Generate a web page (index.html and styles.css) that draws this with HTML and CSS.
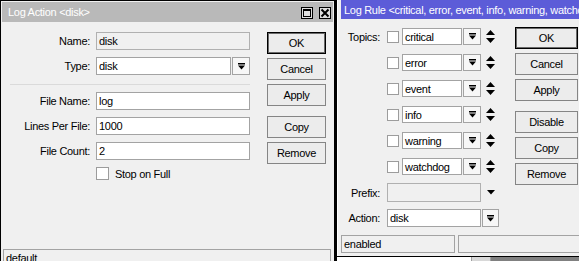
FILE: index.html
```html
<!DOCTYPE html>
<html lang="en">
<head>
    <meta charset="UTF-8">
    <title>Log Action / Log Rule</title>
    <link rel="stylesheet" href="styles.css">
</head>
<body>
    <div class="desk">
        <!-- Log Action window (inactive) -->
        <div class="win win-action">
            <div class="title title-off">
                <span class="title-text">Log Action &lt;disk&gt;</span>
                <span class="tbtn">
                    <svg width="10" height="10" viewBox="0 0 10 10"><rect x="1.5" y="1.5" width="7" height="7" fill="none" stroke="#000"/><rect x="1" y="1" width="8" height="2" fill="#000"/></svg>
                </span>
                <span class="tbtn tbtn-close">
                    <svg width="10" height="10" viewBox="0 0 10 10"><path d="M1.5 1.5 L8.5 8.5 M8.5 1.5 L1.5 8.5" stroke="#000" stroke-width="2"/></svg>
                </span>
            </div>
            <div class="act-body">
                <div class="act-form">
                    <div class="row"><label>Name:</label><div class="field field-off">disk</div></div>
                    <div class="row">
                        <label>Type:</label>
                        <div class="field field-type">disk</div>
                        <div class="dd">
                            <svg width="7" height="7" viewBox="0 0 7 7"><rect x="0" y="0" width="7" height="1.5" fill="#000"/><polygon points="0,2.5 7,2.5 3.5,6.5" fill="#000"/></svg>
                        </div>
                    </div>
                    <div class="sep"></div>
                    <div class="row"><label>File Name:</label><div class="field">log</div></div>
                    <div class="row"><label>Lines Per File:</label><div class="field">1000</div></div>
                    <div class="row"><label>File Count:</label><div class="field">2</div></div>
                    <div class="row row-check"><span class="check"></span><span>Stop on Full</span></div>
                </div>
                <div class="btns">
                    <button class="btn btn-default">OK</button>
                    <button class="btn">Cancel</button>
                    <button class="btn">Apply</button>
                    <button class="btn btn-gap">Copy</button>
                    <button class="btn">Remove</button>
                </div>
            </div>
            <div class="status"><div class="panel">default</div></div>
        </div>

        <div class="right-col">
            <!-- Log Rule window (active) -->
            <div class="win win-rule">
                <div class="title title-on">
                    <span class="title-text">Log Rule &lt;critical, error, event, info, warning, watchdog&gt;</span>
                </div>
                <div class="rule-body">
                    <div class="rule-main">
                        <div class="rule-form">
                            <div class="trow"><label>Topics:</label><span class="check"></span><div class="field">critical</div><div class="dd"><svg width="7" height="7" viewBox="0 0 7 7"><rect width="7" height="1.5" fill="#000"/><polygon points="0,2.5 7,2.5 3.5,6.5" fill="#000"/></svg></div><svg class="updown" width="9" height="13" viewBox="0 0 9 13"><polygon points="4.5,0 9,5 0,5" fill="#000"/><polygon points="0,8 9,8 4.5,13" fill="#000"/></svg></div>
                            <div class="trow"><label></label><span class="check"></span><div class="field">error</div><div class="dd"><svg width="7" height="7" viewBox="0 0 7 7"><rect width="7" height="1.5" fill="#000"/><polygon points="0,2.5 7,2.5 3.5,6.5" fill="#000"/></svg></div><svg class="updown" width="9" height="13" viewBox="0 0 9 13"><polygon points="4.5,0 9,5 0,5" fill="#000"/><polygon points="0,8 9,8 4.5,13" fill="#000"/></svg></div>
                            <div class="trow"><label></label><span class="check"></span><div class="field">event</div><div class="dd"><svg width="7" height="7" viewBox="0 0 7 7"><rect width="7" height="1.5" fill="#000"/><polygon points="0,2.5 7,2.5 3.5,6.5" fill="#000"/></svg></div><svg class="updown" width="9" height="13" viewBox="0 0 9 13"><polygon points="4.5,0 9,5 0,5" fill="#000"/><polygon points="0,8 9,8 4.5,13" fill="#000"/></svg></div>
                            <div class="trow"><label></label><span class="check"></span><div class="field">info</div><div class="dd"><svg width="7" height="7" viewBox="0 0 7 7"><rect width="7" height="1.5" fill="#000"/><polygon points="0,2.5 7,2.5 3.5,6.5" fill="#000"/></svg></div><svg class="updown" width="9" height="13" viewBox="0 0 9 13"><polygon points="4.5,0 9,5 0,5" fill="#000"/><polygon points="0,8 9,8 4.5,13" fill="#000"/></svg></div>
                            <div class="trow"><label></label><span class="check"></span><div class="field">warning</div><div class="dd"><svg width="7" height="7" viewBox="0 0 7 7"><rect width="7" height="1.5" fill="#000"/><polygon points="0,2.5 7,2.5 3.5,6.5" fill="#000"/></svg></div><svg class="updown" width="9" height="13" viewBox="0 0 9 13"><polygon points="4.5,0 9,5 0,5" fill="#000"/><polygon points="0,8 9,8 4.5,13" fill="#000"/></svg></div>
                            <div class="trow"><label></label><span class="check"></span><div class="field">watchdog</div><div class="dd"><svg width="7" height="7" viewBox="0 0 7 7"><rect width="7" height="1.5" fill="#000"/><polygon points="0,2.5 7,2.5 3.5,6.5" fill="#000"/></svg></div><svg class="updown" width="9" height="13" viewBox="0 0 9 13"><polygon points="4.5,0 9,5 0,5" fill="#000"/><polygon points="0,8 9,8 4.5,13" fill="#000"/></svg></div>

                            <div class="prow prow-prefix">
                                <label>Prefix:</label>
                                <div class="field field-off field-wide"></div>
                                <svg class="arrow-only" width="8" height="5" viewBox="0 0 8 5"><polygon points="0,0 8,0 4,4.5" fill="#000"/></svg>
                            </div>
                            <div class="prow prow-action">
                                <label>Action:</label>
                                <div class="field field-wide">disk</div>
                                <div class="dd dd-action"><svg width="7" height="7" viewBox="0 0 7 7"><rect width="7" height="1.5" fill="#000"/><polygon points="0,2.5 7,2.5 3.5,6.5" fill="#000"/></svg></div>
                            </div>
                        </div>
                        <div class="btns btns-rule">
                            <button class="btn btn-default">OK</button>
                            <button class="btn">Cancel</button>
                            <button class="btn">Apply</button>
                            <button class="btn btn-gap">Disable</button>
                            <button class="btn">Copy</button>
                            <button class="btn">Remove</button>
                        </div>
                    </div>
                    <div class="rule-status">
                        <div class="panel panel-first">enabled</div>
                        <div class="panel panel-rest"></div>
                    </div>
                </div>
            </div>
            <!-- piece of the window lying below -->
            <div class="below">
                <div class="below-white"></div>
                <div class="below-light"></div>
                <div class="below-dark"></div>
            </div>
        </div>
    </div>
</body>
</html>
```

FILE: styles.css
```css
* {
    box-sizing: border-box;
}

body {
    margin: 0;
    background: #f0f0f0;
    font-family: "Liberation Sans", Arial, sans-serif;
    font-size: 11px;
    letter-spacing: -0.3px;
    color: #000;
    overflow: hidden;
}

.desk {
    display: flex;
    height: 261px;
    overflow: hidden;
}

/* Windows */
.win {
    background: #f0f0f0;
    flex-shrink: 0;
}

.title {
    display: flex;
    align-items: center;
    color: #fff;
    white-space: nowrap;
    overflow: hidden;
}

.title-text {
    flex: 1;
}

.title-off {
    height: 20px;
    margin: 0 1px;
    padding: 0 2px 0 6px;
    background: #b9b9b9;
}

.title-on {
    height: 19px;
    padding: 0 0 0 3px;
    background: #5c5cd8;
}

.tbtn {
    width: 12px;
    height: 12px;
    border: 1px solid #000;
    background: #dedede;
    display: flex;
    align-items: center;
    justify-content: center;
    margin-top: 2px;
}

.tbtn-close {
    margin-left: 6px;
}

/* Log Action window */
.win-action {
    width: 335px;
    height: 290px;
    border: 1px solid #000;
    border-bottom: 0;
    padding-top: 1px;
}

.act-body {
    display: flex;
    height: 227px;
    padding-top: 10px;
}

.act-form {
    width: 249px;
    display: flex;
    flex-direction: column;
    gap: 7px;
}

.row {
    display: flex;
    align-items: center;
    height: 18px;
}

.row label {
    width: 89px;
    margin-right: 6px;
    text-align: right;
}

.field {
    height: 100%;
    flex: 1;
    background: #fff;
    border: 1px solid #a3a3a3;
    padding: 0 2px;
    display: flex;
    align-items: center;
    white-space: nowrap;
    overflow: hidden;
}

.field-off {
    background: #f0f0f0;
    border-color: #b0b0b0;
}

.dd {
    width: 18px;
    height: 100%;
    margin-left: 1px;
    border: 1px solid #a3a3a3;
    background: #f7f7f7;
    display: flex;
    align-items: center;
    justify-content: center;
    flex-shrink: 0;
}

.sep {
    margin: 2px 0 0 9px;
    height: 1px;
    background: #dadada;
}

.row-check {
    height: 13px;
    padding-left: 95px;
}

.check {
    width: 13px;
    height: 13px;
    border: 1px solid #9c9c9c;
    background: #fff;
    flex-shrink: 0;
}

.row-check .check {
    margin-right: 6px;
}

/* Buttons */
.btns {
    display: flex;
    flex-direction: column;
    gap: 4px;
    width: 59px;
    margin-left: 17px;
}

.btn {
    height: 22px;
    padding: 0;
    border: 1px solid #858585;
    background: #ececec;
    font-family: inherit;
    font-size: 11px;
    letter-spacing: -0.3px;
    color: #000;
}

.btn-default {
    border-color: #000;
    box-shadow: inset 0 0 0 1px #6a6a6a;
}

.btn-gap {
    margin-top: 6px;
}

.status {
    padding: 0 3px 0 2px;
}

.panel {
    height: 18px;
    border: 1px solid #a3a3a3;
    padding: 2px 2px 0;
    white-space: nowrap;
}

/* Log Rule window */
.right-col {
    display: flex;
    flex-direction: column;
    width: 260px;
    flex-shrink: 0;
}

.win-rule {
    margin-top: -2px;
    border-left: 2px solid #000;
    border-top: 1px solid #000;
    border-bottom: 1px solid #000;
    padding: 1px 0 3px 4px;
    box-shadow: inset 1px 0 0 #fff;
}

.rule-body {
    padding-top: 8px;
}

.rule-main {
    display: flex;
    align-items: flex-start;
}

.rule-form {
    width: 154px;
    padding-top: 1px;
    display: flex;
    flex-direction: column;
    gap: 9px;
}

.trow,
.prow {
    display: flex;
    align-items: center;
    height: 17px;
}

.trow label,
.prow label {
    width: 39px;
    margin-right: 7px;
    text-align: right;
    flex-shrink: 0;
}

.trow .check {
    width: 12px;
    height: 12px;
    margin-right: 3px;
}

.trow .field {
    flex: none;
    width: 60px;
}

.trow .dd {
    width: 18px;
}

.updown {
    margin-left: 5px;
}

.prow-prefix {
    height: 19px;
    margin-top: -1px;
}

.prow-action {
    height: 18px;
    margin-top: -2px;
}

.field-wide {
    flex: none;
    width: 94px;
}

.arrow-only {
    margin-left: 6px;
}

.dd-action {
    width: 17px;
}

.btns-rule {
    width: 63px;
    margin-left: 20px;
}

.rule-status {
    display: flex;
    gap: 3px;
    margin-top: 8px;
}

.panel-first {
    width: 114px;
}

.panel-rest {
    flex: 1;
}

/* window underneath */
.below {
    display: flex;
    flex: 1;
    border-left: 2px solid #000;
}

.below-white {
    width: 134px;
    background: #fff;
}

.below-light {
    width: 20px;
    background: #d8d8d8;
    border-left: 1px solid #a0a0a0;
    border-right: 1px solid #a0a0a0;
}

.below-dark {
    flex: 1;
    background: #808080;
}
```
